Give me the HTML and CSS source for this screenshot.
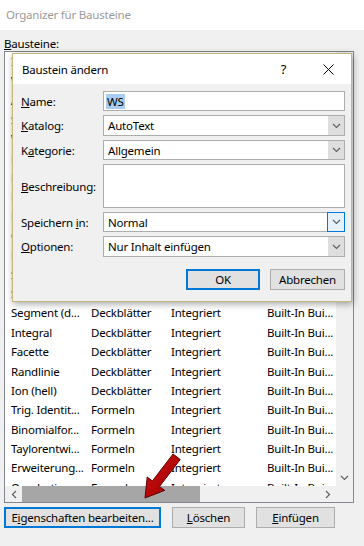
FILE: index.html
```html
<!DOCTYPE html>
<html>
<head>
	<title>Organizer für Bausteine</title>
	<link rel="stylesheet" href="styles.css">
</head>
<body>
	<div class="window">
		<div class="titlebar">Organizer für Bausteine</div>
		<div class="content">
			<div class="caption"><u>B</u>austeine:</div>
			<div class="listbox">
				<div class="rows">
					<div class="row"><span>Ion (dunkel)</span><span>Deckblätter</span><span>Integriert</span><span>Built-In Bui...</span></div>
					<div class="row"><span>Whisp</span><span>Deckblätter</span><span>Integriert</span><span>Built-In Bui...</span></div>
					<div class="row"><span>Austin</span><span>Deckblätter</span><span>Integriert</span><span>Built-In Bui...</span></div>
					<div class="row"><span>Semaphor</span><span>Deckblätter</span><span>Integriert</span><span>Built-In Bui...</span></div>
					<div class="row"><span>Wisp</span><span>Deckblätter</span><span>Integriert</span><span>Built-In Bui...</span></div>
					<div class="row"><span>Bewegung</span><span>Deckblätter</span><span>Integriert</span><span>Built-In Bui...</span></div>
					<div class="row"><span>Pfiff</span><span>Deckblätter</span><span>Integriert</span><span>Built-In Bui...</span></div>
					<div class="row"><span>Rückblick</span><span>Deckblätter</span><span>Integriert</span><span>Built-In Bui...</span></div>
					<div class="row"><span>Filigran</span><span>Deckblätter</span><span>Integriert</span><span>Built-In Bui...</span></div>
					<div class="row"><span>Gitter</span><span>Deckblätter</span><span>Integriert</span><span>Built-In Bui...</span></div>
					<div class="row"><span>Retrospektive</span><span>Deckblätter</span><span>Integriert</span><span>Built-In Bui...</span></div>
					<div class="row"><span>Seitenlinie</span><span>Deckblätter</span><span>Integriert</span><span>Built-In Bui...</span></div>
					<div class="row"><span>Segment (h...</span><span>Deckblätter</span><span>Integriert</span><span>Built-In Bui...</span></div>
					<div class="row"><span>Segment (d...</span><span>Deckblätter</span><span>Integriert</span><span>Built-In Bui...</span></div>
					<div class="row"><span>Integral</span><span>Deckblätter</span><span>Integriert</span><span>Built-In Bui...</span></div>
					<div class="row"><span>Facette</span><span>Deckblätter</span><span>Integriert</span><span>Built-In Bui...</span></div>
					<div class="row"><span>Randlinie</span><span>Deckblätter</span><span>Integriert</span><span>Built-In Bui...</span></div>
					<div class="row"><span>Ion (hell)</span><span>Deckblätter</span><span>Integriert</span><span>Built-In Bui...</span></div>
					<div class="row"><span>Trig. Identit...</span><span>Formeln</span><span>Integriert</span><span>Built-In Bui...</span></div>
					<div class="row"><span>Binomialfor...</span><span>Formeln</span><span>Integriert</span><span>Built-In Bui...</span></div>
					<div class="row"><span>Taylorentwi...</span><span>Formeln</span><span>Integriert</span><span>Built-In Bui...</span></div>
					<div class="row"><span>Erweiterung...</span><span>Formeln</span><span>Integriert</span><span>Built-In Bui...</span></div>
					<div class="row"><span>Quadratisc...</span><span>Formeln</span><span>Integriert</span><span>Built-In Bui...</span></div>
				</div>
				<div class="vscroll">
					<svg class="chev" width="9" height="6" viewBox="0 0 9 6"><polyline points="1,1 4.5,4.5 8,1" /></svg>
				</div>
				<div class="hscroll">
					<div class="sbtn"><svg class="chev" width="6" height="9" viewBox="0 0 6 9"><polyline points="5,1 1.5,4.5 5,8" /></svg></div>
					<div class="thumb"></div>
					<div class="track"></div>
					<div class="sbtn"><svg class="chev" width="6" height="9" viewBox="0 0 6 9"><polyline points="1,1 4.5,4.5 1,8" /></svg></div>
				</div>
				<div class="corner"></div>
			</div>
			<div class="actions">
				<button class="btn default wide">E<u>i</u>genschaften bearbeiten...</button>
				<button class="btn del"><u>L</u>öschen</button>
				<button class="btn ins"><u>E</u>infügen</button>
			</div>
		</div>

		<div class="dialog">
			<div class="dlg-title">
				<span class="dlg-name">Baustein ändern</span>
				<span class="cap-btn">?</span>
				<span class="cap-btn">
					<svg width="11" height="11" viewBox="0 0 11 11"><path d="M0.5 0.5 L10.5 10.5 M10.5 0.5 L0.5 10.5" /></svg>
				</span>
			</div>
			<div class="dlg-body">
				<div class="form">
					<label><span><u>N</u>ame:</span></label>
					<div class="field"><span class="sel">WS</span></div>

					<label><span><u>K</u>atalog:</span></label>
					<div class="field combo"><span class="val">AutoText</span><span class="drop"><svg class="chev" width="9" height="6" viewBox="0 0 9 6"><polyline points="1,1 4.5,4.5 8,1" /></svg></span></div>

					<label><span>K<u>a</u>tegorie:</span></label>
					<div class="field combo"><span class="val">Allgemein</span><span class="drop"><svg class="chev" width="9" height="6" viewBox="0 0 9 6"><polyline points="1,1 4.5,4.5 8,1" /></svg></span></div>

					<label><span><u>B</u>eschreibung:</span></label>
					<div class="field"></div>

					<label><span>Speichern <u>i</u>n:</span></label>
					<div class="field combo"><span class="val">Normal</span><span class="drop focus"><svg class="chev" width="9" height="6" viewBox="0 0 9 6"><polyline points="1,1 4.5,4.5 8,1" /></svg></span></div>

					<label><span><u>O</u>ptionen:</span></label>
					<div class="field combo"><span class="val">Nur Inhalt einfügen</span><span class="drop"><svg class="chev" width="9" height="6" viewBox="0 0 9 6"><polyline points="1,1 4.5,4.5 8,1" /></svg></span></div>
				</div>
				<div class="dlg-actions">
					<button class="btn default ok">OK</button>
					<button class="btn cancel">Abbrechen</button>
				</div>
			</div>
		</div>

		<svg class="pointer" width="46" height="52" viewBox="0 0 46 52">
			<defs>
				<linearGradient id="red" x1="0" y1="0" x2="1" y2="1">
					<stop offset="0" stop-color="#d21010" />
					<stop offset="1" stop-color="#9a0000" />
				</linearGradient>
			</defs>
			<polygon points="7,48 26.7,40.4 21.5,36.5 42.2,9.5 35.1,4 14.4,31 9.2,27" fill="url(#red)" stroke="#5e0000" stroke-width="1" stroke-linejoin="round" />
		</svg>
	</div>
</body>
</html>
```

FILE: styles.css
```css
body {
  margin: 0;
  font-family: "Noto Sans", "Open Sans", sans-serif;
  font-size: 11.5px;
  letter-spacing: -0.2px;
  color: #000;
  background: #f0f0f0;
}

.window {
  position: relative;
  width: 364px;
  height: 546px;
  overflow: hidden;
}

.titlebar {
  height: 30px;
  line-height: 30px;
  padding-left: 6px;
  background: #fff;
  color: #9a9a9a;
}

.content {
  padding: 6px 0 0 4px;
}

.caption {
  height: 15px;
  line-height: 15px;
}

/* list */
.listbox {
  width: 350px;
  height: 452px;
  box-sizing: border-box;
  border: 1px solid #828790;
  background: #fff;
  display: grid;
  grid-template-columns: 1fr 17px;
  grid-template-rows: 1fr 16px;
}

.rows {
  overflow: hidden;
}

.row {
  display: grid;
  grid-template-columns: 80px 80px 96px 1fr;
  height: 19.35px;
  line-height: 19.35px;
  padding-left: 6px;
  white-space: nowrap;
}

.vscroll {
  background: #f0f0f0;
  display: flex;
  align-items: flex-end;
  justify-content: center;
  padding-bottom: 5px;
}

.hscroll {
  display: flex;
  background: #f0f0f0;
}

.sbtn {
  width: 17px;
  display: flex;
  align-items: center;
  justify-content: center;
}

.thumb {
  width: 178px;
  background: #a6a6a6;
}

.track {
  flex: 1;
}

.corner {
  background: #f0f0f0;
}

.chev {
  fill: none;
  stroke: #606060;
  stroke-width: 1.2;
}

/* buttons */
.btn {
  height: 21px;
  box-sizing: border-box;
  border: 1px solid #adadad;
  background: #e1e1e1;
  font: inherit;
  letter-spacing: inherit;
  color: #000;
  padding: 0;
  white-space: nowrap;
}

.btn.default {
  border: 2px solid #0078d7;
}

.actions {
  display: flex;
  gap: 11px;
  margin-top: 4px;
}

.wide { width: 157px; }
.del { width: 73px; }
.ins { width: 79px; }

/* dialog */
.dialog {
  position: absolute;
  left: 12px;
  top: 53px;
  width: 340px;
  height: 249px;
  box-sizing: border-box;
  border: 1px solid #c3b77a;
  background: #f0f0f0;
  box-shadow: 1px 2px 7px rgba(0, 0, 0, 0.35);
}

.dlg-title {
  height: 30px;
  background: #fff;
  display: flex;
  align-items: center;
}

.dlg-name {
  flex: 1;
  padding-left: 9px;
}

.cap-btn {
  width: 45px;
  height: 30px;
  display: flex;
  align-items: center;
  justify-content: center;
  font-size: 13px;
}

.cap-btn path {
  stroke: #000;
  stroke-width: 1;
}

.dlg-body {
  padding: 7px 6px 0 8px;
}

.form {
  display: grid;
  grid-template-columns: 82px 1fr;
  grid-template-rows: 20px 21px 20px 44px 20px 21px;
  row-gap: 4px;
}

.form label {
  display: flex;
  align-items: center;
}

.field {
  box-sizing: border-box;
  border: 1px solid #adadad;
  background: #fff;
  display: flex;
  align-items: center;
  padding-left: 2px;
}

.sel {
  background: #a9cdf0;
  padding: 0 1px;
  line-height: 15px;
}

.val {
  flex: 1;
  padding-left: 2px;
}

.drop {
  width: 16px;
  align-self: stretch;
  background: #dedede;
  display: flex;
  align-items: center;
  justify-content: center;
}

.drop.focus {
  margin: -1px -1px -1px 0;
  border: 1px solid #0078d7;
  background: #e5f1fb;
}

.dlg-actions {
  display: flex;
  justify-content: flex-end;
  gap: 10px;
  margin-top: 12px;
}

.ok { width: 74px; }
.cancel { width: 75px; }

.pointer {
  position: absolute;
  left: 138px;
  top: 450px;
}
```
